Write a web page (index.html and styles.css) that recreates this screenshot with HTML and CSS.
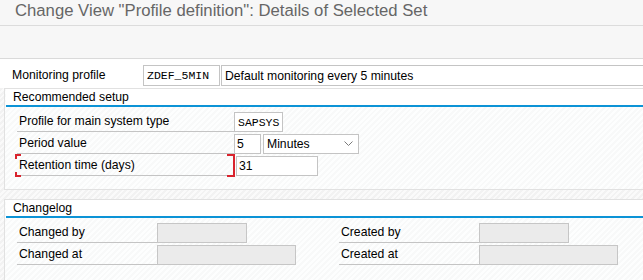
FILE: index.html
```html
<!DOCTYPE html>
<html>
<head>
<meta charset="utf-8">
<link rel="stylesheet" href="styles.css">
</head>
<body>
<header class="titlebar"><h1 class="title">Change View "Profile definition": Details of Selected Set</h1></header>
<div class="toolbar"></div>
<main class="screen">
  <div class="top-row">
    <span class="top-label">Monitoring profile</span>
    <span class="fld mono w-profile">ZDEF_5MIN</span>
    <span class="fld desc">Default monitoring every 5 minutes</span>
  </div>

  <section class="group g-setup">
    <div class="ghead">Recommended setup</div>
    <div class="gbody">
      <div class="row">
        <span class="lbl w-wide">Profile for main system type</span>
        <span class="fld mono w-sys">SAPSYS</span>
      </div>
      <div class="row">
        <span class="lbl w-wide">Period value</span>
        <span class="fld w-num">5</span>
        <span class="fld select w-unit">Minutes<svg class="chev" width="9" height="6" viewBox="0 0 9 6"><polyline points="0.5,0.5 4.5,4.5 8.5,0.5" fill="none" stroke="#7a7a7a" stroke-width="1"/></svg></span>
      </div>
      <div class="row">
        <span class="lbl w-wide focus">Retention time (days)</span>
        <span class="fld w-ret">31</span>
      </div>
    </div>
  </section>

  <section class="group g-log">
    <div class="ghead">Changelog</div>
    <div class="gbody log-grid">
      <div class="row">
        <span class="lbl w-short">Changed by</span>
        <span class="fld off w-user"></span>
      </div>
      <div class="row">
        <span class="lbl w-short">Created by</span>
        <span class="fld off w-user"></span>
      </div>
      <div class="row">
        <span class="lbl w-short">Changed at</span>
        <span class="fld off w-date"></span>
      </div>
      <div class="row">
        <span class="lbl w-short">Created at</span>
        <span class="fld off w-date"></span>
      </div>
    </div>
  </section>
</main>
</body>
</html>
```

FILE: styles.css
```css
* { box-sizing: border-box; }
html, body {
  margin: 0;
  padding: 0;
}
body {
  width: 643px;
  height: 280px;
  overflow: hidden;
  font-family: "Liberation Sans", Arial, sans-serif;
  font-size: 12.2px;
  color: #000;
  background: repeating-linear-gradient(-45deg, #f2f2f2 0 2px, #fafafa 2px 4px);
}
.titlebar {
  height: 26px;
  background: #f7f7f7;
  border-bottom: 1px solid #dcdcdc;
  padding-left: 15px;
}
.title {
  margin: 0;
  font-weight: normal;
  font-size: 16.7px;
  line-height: 21px;
  color: #666;
  white-space: nowrap;
}
.toolbar {
  height: 33px;
  background: #f7f7f7;
  border-bottom: 1px solid #dadada;
}
.screen {
  display: flex;
  flex-direction: column;
}
.top-row {
  display: flex;
  align-items: stretch;
  height: 29px;
  padding: 6px 0 2px 12px;
  background: #fff;
  overflow: hidden;
}
.top-label {
  width: 131px;
  flex: none;
  line-height: 21px;
}
.fld {
  display: flex;
  align-items: center;
  flex: none;
  height: 20px;
  border: 1px solid #c4c4c4;
  background: #fff;
  padding: 0 3px;
  white-space: nowrap;
}
.top-row .fld { height: 21px; }
.mono {
  font-family: "Liberation Mono", "Courier New", monospace;
  font-size: 11.5px;
}
.w-profile { width: 77px; }
.desc { width: 440px; margin-left: 1px; }

.group {
  margin-left: 4px;
  border: 1px solid #e1e1e1;
  border-right: none;
  background: repeating-linear-gradient(-45deg, #f8f9f9 0 2px, #fdfefe 2px 4px);
}
.ghead {
  margin-left: 1px;
  height: 18px;
  padding-left: 7px;
  line-height: 17px;
  background: #fff;
  border-bottom: 2px solid #0c93d6;
}
.gbody {
  display: flex;
  flex-direction: column;
  gap: 2px;
  padding: 5px 0 13px 12px;
}
.row {
  display: flex;
  align-items: stretch;
  height: 20px;
}
.lbl {
  position: relative;
  flex: none;
  height: 20px;
  line-height: 19px;
  padding-left: 2px;
  border-bottom: 1px solid #c4c4c4;
}
.w-wide { width: 217px; }
.w-short { width: 140px; }
.w-sys { width: 49px; }
.w-num { width: 27px; padding-left: 2px; }
.w-unit { width: 96px; margin-left: 2px; justify-content: space-between; padding-right: 5px; }
.w-ret { width: 82px; margin-left: 2px; padding-left: 2px; }
.w-user { width: 90px; }
.w-date { width: 139px; }
.off { background: #ebebeb; border-color: #c6c6c6; }

.focus::before,
.focus::after {
  content: "";
  position: absolute;
  top: -2px;
  bottom: -2px;
  width: 6px;
}
.focus::before {
  left: -2px;
  background:
    linear-gradient(#d9232d, #d9232d) left top / 6px 2px no-repeat,
    linear-gradient(#d9232d, #d9232d) left top / 2px 5px no-repeat,
    linear-gradient(#d9232d, #d9232d) left bottom / 6px 2px no-repeat,
    linear-gradient(#d9232d, #d9232d) left bottom / 2px 5px no-repeat;
}
.focus::after {
  right: -1px;
  border: 2px solid #d9232d;
  border-left: none;
}

.g-log { margin-top: 9px; }
.log-grid {
  display: grid;
  grid-template-columns: 320px auto;
  row-gap: 2px;
  padding: 5px 0 15px 12px;
}
```
